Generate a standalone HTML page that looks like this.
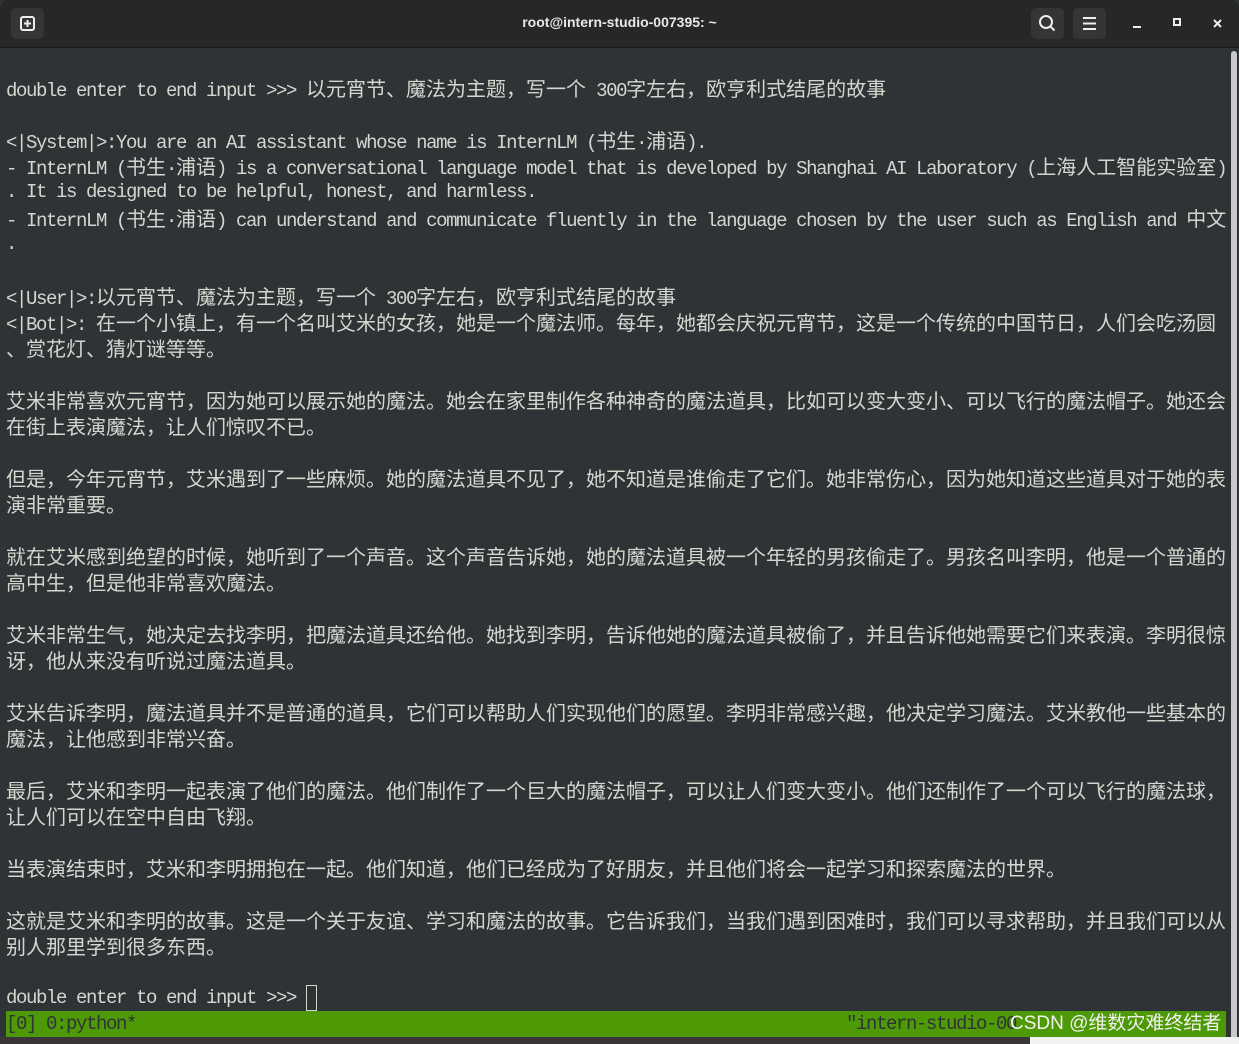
<!DOCTYPE html>
<html><head><meta charset="utf-8"><style>
html,body{margin:0;padding:0;width:1239px;height:1044px;overflow:hidden;background:#2e3436}
.title{position:absolute;left:0;top:0;width:1239px;height:47px;background:#272727;border-bottom:1px solid #1a1a1a;border-radius:8px 8px 0 0}
.title .t{position:absolute;left:0;right:0;top:14px;text-align:center;color:#e8e8e8;font:bold 14px "Liberation Sans",sans-serif}
.btn{position:absolute;top:8px;width:33px;height:31px;background:#353535;border-radius:5px}
.term{position:absolute;left:6px;top:49px;width:1224px;font-family:"Liberation Mono",monospace;font-size:19px;letter-spacing:-1.4px;color:#d3d7cf}
.r{height:26px;line-height:26px;white-space:pre}
.c{font-family:"Noto Sans CJK SC",sans-serif;font-size:20px;letter-spacing:0}
.status{position:absolute;left:6px;top:1011px;width:1220px;height:26px;background:#4e9a06;color:#2e3436;font-family:"Liberation Mono",monospace;font-size:19px;letter-spacing:-1.4px;line-height:26px;white-space:pre}
.sb{position:absolute;left:1230px;top:49px;width:9px;height:995px;background:#2e3436}
.thumb{position:absolute;left:1231px;top:51px;width:6px;height:990px;background:#c8c8c8;border-radius:3px}
</style></head><body>
<div class="title">
<div class="btn" style="left:11px"><svg width="33" height="31"><rect x="10" y="9" width="13" height="13" rx="2" fill="none" stroke="#eee" stroke-width="2"/><path d="M16.5 12v7M13 15.5h7" stroke="#eee" stroke-width="2"/></svg></div>
<div class="t">root@intern-studio-007395: ~</div>
<div class="btn" style="left:1031px"><svg width="33" height="31"><circle cx="15" cy="14" r="6" fill="none" stroke="#eee" stroke-width="2"/><path d="M19.5 18.5l4 4" stroke="#eee" stroke-width="2"/></svg></div>
<div class="btn" style="left:1073px"><svg width="33" height="31"><path d="M10 10h13M10 15.5h13M10 21h13" stroke="#eee" stroke-width="2"/></svg></div>
<svg style="position:absolute;left:1125px;top:14px" width="110" height="20"><path d="M8 13h8" stroke="#eee" stroke-width="2"/><rect x="49" y="5" width="6" height="6" fill="none" stroke="#eee" stroke-width="2"/><path d="M89 6l7 7M96 6l-7 7" stroke="#eee" stroke-width="2"/></svg>
</div>
<div class="term">
<div class="r"> </div>
<div class="r">double enter to end input &gt;&gt;&gt; <span class="c">以元宵节、魔法为主题，写一个</span> 300<span class="c">字左右，欧亨利式结尾的故事</span></div>
<div class="r"> </div>
<div class="r">&lt;|System|&gt;:You are an AI assistant whose name is InternLM (<span class="c">书生</span>·<span class="c">浦语</span>).</div>
<div class="r">- InternLM (<span class="c">书生</span>·<span class="c">浦语</span>) is a conversational language model that is developed by Shanghai AI Laboratory (<span class="c">上海人工智能实验室</span>)</div>
<div class="r">. It is designed to be helpful, honest, and harmless.</div>
<div class="r">- InternLM (<span class="c">书生</span>·<span class="c">浦语</span>) can understand and communicate fluently in the language chosen by the user such as English and <span class="c">中文</span></div>
<div class="r">.</div>
<div class="r"> </div>
<div class="r">&lt;|User|&gt;:<span class="c">以元宵节、魔法为主题，写一个</span> 300<span class="c">字左右，欧亨利式结尾的故事</span></div>
<div class="r">&lt;|Bot|&gt;: <span class="c">在一个小镇上，有一个名叫艾米的女孩，她是一个魔法师。每年，她都会庆祝元宵节，这是一个传统的中国节日，人们会吃汤圆</span></div>
<div class="r"><span class="c">、赏花灯、猜灯谜等等。</span></div>
<div class="r"> </div>
<div class="r"><span class="c">艾米非常喜欢元宵节，因为她可以展示她的魔法。她会在家里制作各种神奇的魔法道具，比如可以变大变小、可以飞行的魔法帽子。她还会</span></div>
<div class="r"><span class="c">在街上表演魔法，让人们惊叹不已。</span></div>
<div class="r"> </div>
<div class="r"><span class="c">但是，今年元宵节，艾米遇到了一些麻烦。她的魔法道具不见了，她不知道是谁偷走了它们。她非常伤心，因为她知道这些道具对于她的表</span></div>
<div class="r"><span class="c">演非常重要。</span></div>
<div class="r"> </div>
<div class="r"><span class="c">就在艾米感到绝望的时候，她听到了一个声音。这个声音告诉她，她的魔法道具被一个年轻的男孩偷走了。男孩名叫李明，他是一个普通的</span></div>
<div class="r"><span class="c">高中生，但是他非常喜欢魔法。</span></div>
<div class="r"> </div>
<div class="r"><span class="c">艾米非常生气，她决定去找李明，把魔法道具还给他。她找到李明，告诉他她的魔法道具被偷了，并且告诉他她需要它们来表演。李明很惊</span></div>
<div class="r"><span class="c">讶，他从来没有听说过魔法道具。</span></div>
<div class="r"> </div>
<div class="r"><span class="c">艾米告诉李明，魔法道具并不是普通的道具，它们可以帮助人们实现他们的愿望。李明非常感兴趣，他决定学习魔法。艾米教他一些基本的</span></div>
<div class="r"><span class="c">魔法，让他感到非常兴奋。</span></div>
<div class="r"> </div>
<div class="r"><span class="c">最后，艾米和李明一起表演了他们的魔法。他们制作了一个巨大的魔法帽子，可以让人们变大变小。他们还制作了一个可以飞行的魔法球，</span></div>
<div class="r"><span class="c">让人们可以在空中自由飞翔。</span></div>
<div class="r"> </div>
<div class="r"><span class="c">当表演结束时，艾米和李明拥抱在一起。他们知道，他们已经成为了好朋友，并且他们将会一起学习和探索魔法的世界。</span></div>
<div class="r"> </div>
<div class="r"><span class="c">这就是艾米和李明的故事。这是一个关于友谊、学习和魔法的故事。它告诉我们，当我们遇到困难时，我们可以寻求帮助，并且我们可以从</span></div>
<div class="r"><span class="c">别人那里学到很多东西。</span></div>
<div class="r"> </div>
<div class="r">double enter to end input &gt;&gt;&gt; <span style="display:inline-block;width:11px;height:26px;border:1px solid #d3d7cf;box-sizing:border-box;vertical-align:middle"></span></div>
</div>
<div class="status">[0] 0:python*<span style="position:absolute;left:840px">"intern-studio-00</span><span class="c" style="position:absolute;left:1004px;top:0;color:#f0f0f0;font-size:19px;font-family:'Liberation Sans','Noto Sans CJK SC',sans-serif">CSDN @维数灾难终结者</span></div>
<div class="sb"></div><div class="thumb"></div>
<div style="position:absolute;left:0;top:1037px;width:1030px;height:7px;background:#3a3538"></div>
<div style="position:absolute;left:1030px;top:1037px;width:209px;height:7px;background:#f2f2f2"></div>
</body></html>
